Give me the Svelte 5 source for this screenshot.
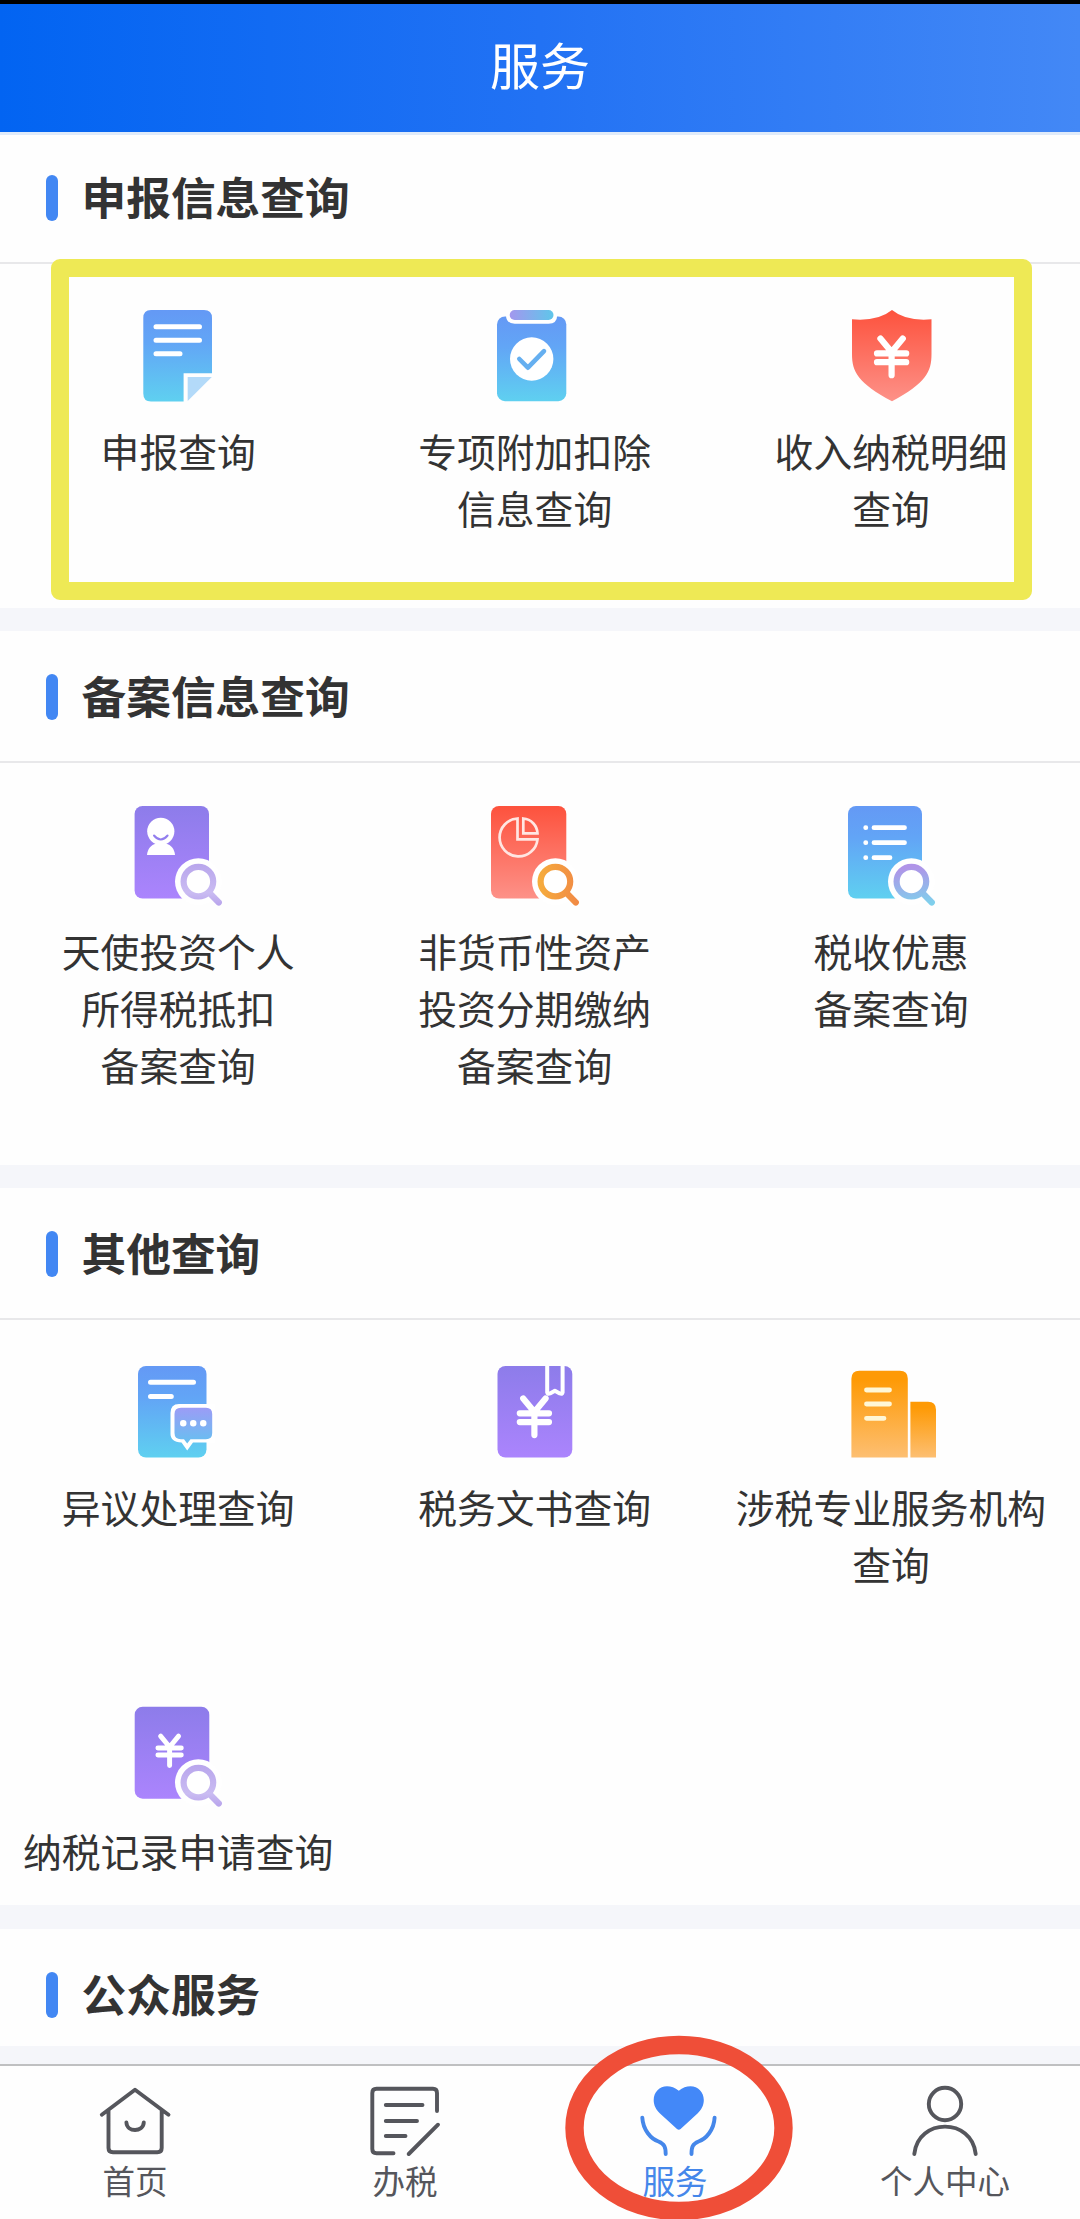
<script>
	const sections = [
		{
			title: '申报信息查询',
			items: [
				{ icon: 'report', lines: ['申报查询'] },
				{ icon: 'clipboard', lines: ['专项附加扣除', '信息查询'] },
				{ icon: 'shield', lines: ['收入纳税明细', '查询'] }
			]
		},
		{
			title: '备案信息查询',
			items: [
				{ icon: 'angel', lines: ['天使投资个人', '所得税抵扣', '备案查询'] },
				{ icon: 'asset', lines: ['非货币性资产', '投资分期缴纳', '备案查询'] },
				{ icon: 'discount', lines: ['税收优惠', '备案查询'] }
			]
		},
		{
			title: '其他查询',
			short: true,
			items: [
				{ icon: 'dispute', lines: ['异议处理查询'] },
				{ icon: 'document', lines: ['税务文书查询'] },
				{ icon: 'agency', lines: ['涉税专业服务机构', '查询'] },
				{ icon: 'record', lines: ['纳税记录申请查询'] }
			]
		},
		{ title: '公众服务', items: [] }
	];

	const tabs = [
		{ id: 'home', label: '首页' },
		{ id: 'tax', label: '办税' },
		{ id: 'service', label: '服务' },
		{ id: 'me', label: '个人中心' }
	];

	let active = $state('service');
</script>

{#snippet yen(x, y, s)}
	<g transform="translate({x} {y}) scale({s})" class="white" stroke-width="6.2">
		<path d="M-11.2 -18L0 -4.500L11.2 -18M0 -4.500V18.600M-14.600 -3.200H14.600M-14.600 5.600H14.600" />
	</g>
{/snippet}

{#snippet lens(paint)}
	<circle cx="75.400" cy="80.600" r="23.400" fill="#fff" />
	<g stroke={paint} fill="none" stroke-width="6.200" stroke-linecap="round">
		<circle cx="75.400" cy="80.600" r="14.800" />
		<path d="M87 92.500L95.800 101.500" />
	</g>
{/snippet}

<svg class="defs" width="0" height="0">
	<defs>
		<linearGradient id="blue" x1="0" y1="0" x2="0" y2="1">
			<stop offset="0" stop-color="#6499f5" />
			<stop offset="0.35" stop-color="#62a5f6" />
			<stop offset="1" stop-color="#5fd0f0" />
		</linearGradient>
		<linearGradient id="purple" x1="0" y1="0" x2="0" y2="1">
			<stop offset="0" stop-color="#8d7cea" />
			<stop offset="1" stop-color="#ab84fd" />
		</linearGradient>
		<linearGradient id="red" x1="0" y1="0" x2="0" y2="1">
			<stop offset="0" stop-color="#fd523d" />
			<stop offset="1" stop-color="#fd9188" />
		</linearGradient>
		<linearGradient id="orange" x1="0" y1="0" x2="0" y2="1">
			<stop offset="0.1" stop-color="#fe9a05" />
			<stop offset="1" stop-color="#fdbf72" />
		</linearGradient>
		<linearGradient id="clip" x1="0" y1="0" x2="1" y2="0">
			<stop offset="0" stop-color="#a397ee" />
			<stop offset="1" stop-color="#5fc6ea" />
		</linearGradient>
		<linearGradient id="bubble" x1="0" y1="0" x2="0" y2="1">
			<stop offset="0" stop-color="#9c9cf6" />
			<stop offset="1" stop-color="#66c0f0" />
		</linearGradient>
		<linearGradient id="lensLilac" gradientUnits="userSpaceOnUse" x1="75" y1="62" x2="75" y2="104">
			<stop offset="0" stop-color="#b8a5ec" />
			<stop offset="0.7" stop-color="#cabcf2" />
			<stop offset="1" stop-color="#b9a5ec" />
		</linearGradient>
		<linearGradient id="lensOrange" gradientUnits="userSpaceOnUse" x1="58" y1="80" x2="98" y2="80">
			<stop offset="0" stop-color="#f6ad3c" />
			<stop offset="1" stop-color="#f18a45" />
		</linearGradient>
		<linearGradient id="lensBlue" gradientUnits="userSpaceOnUse" x1="75" y1="62" x2="80" y2="104">
			<stop offset="0.1" stop-color="#b094e8" />
			<stop offset="1" stop-color="#7fd0ec" />
		</linearGradient>
	</defs>
</svg>

<div class="page">
	<header>服务</header>

	<main>
		{#each sections as section}
			<section>
				<h2><span>{section.title}</span></h2>
				{#if section.items.length}
					<div class="grid" class:short={section.short}>
						{#each section.items as item}
							<div class="item">
								<svg class="icon" viewBox="0 0 110 110">
									{#if item.icon === 'report'}
										<path d="M28 8H81Q89 8 89 16V71.300H60.600V99.500H28Q20.300 99.500 20.300 91.500V16Q20.300 8 28 8Z" fill="url(#blue)" />
										<path d="M64.700 75H88.800L64.700 99Z" fill="#b3daf9" />
										<path class="white" stroke-width="5" d="M33 24.800H76.500M33 38.200H76.500M33 51.700H57" />
									{:else if item.icon === 'clipboard'}
										<rect x="17" y="14.500" width="69.300" height="84.700" rx="8" fill="url(#blue)" />
										<path d="M26 8H77.200V13Q77.200 21.700 68.500 21.700H34.700Q26 21.700 26 13Z" fill="#fff" />
										<rect x="29.700" y="8" width="43.800" height="10" rx="5" fill="url(#clip)" />
										<circle cx="51.700" cy="57" r="21.700" fill="#fff" />
										<path d="M39.300 57L47.900 65.700L64 49.200" fill="none" stroke="#65aff0" stroke-width="4.600" stroke-linecap="round" stroke-linejoin="round" />
									{:else if item.icon === 'shield'}
										<path d="M56 8Q70 19.500 95.500 17.300V52C95.500 70 90 81 56 99.300C22 81 16 70 16 52V17.300Q42 19.500 56 8Z" fill="url(#red)" />
										{@render yen(55.6, 54.6, 1)}
									{:else if item.icon === 'angel'}
										<rect x="11.600" y="5" width="74.400" height="92.500" rx="8" fill="url(#purple)" />
										<circle cx="37.800" cy="30.300" r="13.600" fill="#fff" />
										<path d="M24 54C24.500 48 28 44 33 42.500H43C48 44 51.500 48 52 54Z" fill="#fff" />
										<path d="M31 34.500Q37.800 42.500 44.600 34.500" fill="none" stroke="#927eee" stroke-width="2" stroke-linecap="round" />
										{@render lens('url(#lensLilac)')}
									{:else if item.icon === 'asset'}
										<rect x="11" y="5" width="75.300" height="92.500" rx="8" fill="url(#red)" />
										<path d="M37.500 17.500A19 19 0 1 0 57.500 38.300H37.500ZM43.300 17.500V32.300H57.500A15.500 15.500 0 0 0 43.300 17.500Z" fill="none" stroke="#ffe6e2" stroke-width="2.700" />
										{@render lens('url(#lensOrange)')}
									{:else if item.icon === 'discount'}
										<rect x="12" y="5" width="74" height="92.500" rx="8" fill="url(#blue)" />
										<path class="white" stroke-width="4.800" d="M29.700 26.700H29.800M38 26.700H68.500M29.700 41.700H29.800M38 41.700H68.500M29.700 56.700H29.800M38 56.700H54" />
										{@render lens('url(#lensBlue)')}
									{:else if item.icon === 'dispute'}
										<rect x="15" y="8" width="68.500" height="91.500" rx="8" fill="url(#blue)" />
										<path class="white" stroke-width="5" d="M27.500 24.300H70.500M27.500 38.400H48.300" />
										<path d="M56 46H92V84.600H70L64.200 92.500L58.500 84.600C51 84 47.500 81 47.500 76V55Q47.500 46 56 46Z" fill="#fff" />
										<path d="M58 49.700H83Q89.200 49.700 89.200 56V75Q89.200 81.200 83 81.200H67.500L64.200 85.500L61 81.200H58Q51.500 81.200 51.500 75V56Q51.500 49.700 58 49.700Z" fill="url(#bubble)" />
										<path class="white" stroke-width="6.400" d="M60.200 65.200H60.300M70.200 65.200H70.300M80.200 65.200H80.300" />
									{:else if item.icon === 'document'}
										<rect x="17.500" y="8" width="74.800" height="91.500" rx="8" fill="url(#purple)" />
										<path class="white butt" stroke-width="4" d="M67.200 8V34.500Q67.500 36.500 70 35.500L74.900 32.800L79.800 35.500Q82.300 36.500 82.600 34.500V8" />
										{@render yen(54.4, 58.5, 1)}
									{:else if item.icon === 'agency'}
										<path d="M15.400 99.500V20.700Q15.400 12.700 23.400 12.700H63.800Q71.800 12.700 71.800 20.700V99.500Z" fill="url(#orange)" />
										<path d="M74.400 99.500V43.700H92Q100 43.700 100 51.700V99.500Z" fill="url(#orange)" />
										<path d="M30.500 32H53.500M30.500 46H53.500M30.500 60.300H48" fill="none" stroke="#fff7d6" stroke-width="4.800" stroke-linecap="round" />
									{:else if item.icon === 'record'}
										<rect x="11.700" y="4.700" width="74.600" height="92" rx="8" fill="url(#purple)" />
										{@render yen(46.6, 48.6, 0.8)}
										{@render lens('url(#lensLilac)')}
									{/if}
								</svg>
								{#each item.lines as line}
									<span>{line}</span>
								{/each}
							</div>
						{/each}
					</div>
				{/if}
			</section>
		{/each}
	</main>

	<nav>
		{#each tabs as tab}
			<button class:active={active === tab.id} onclick={() => (active = tab.id)}>
				<svg class="tab-icon" viewBox="0 0 80 80">
					{#if tab.id === 'home'}
						<path d="M6.800 34.700L40 9.700L73.500 34.700M13.500 30.500V68Q13.500 72.300 18 72.300H62.300Q66.700 72.300 66.700 68V30.500M31.400 42.500C32 52.500 48 52.500 48.800 42.500" />
					{:else if tab.id === 'tax'}
						<path d="M72 31V13Q72 8.800 68 8.800H11.500Q7.300 8.800 7.300 13V69Q7.300 73.300 11.500 73.300H28.500M20.800 25H57.500M20.800 41H52M20.800 56H40.500M73 44.700L43.700 74" />
					{:else if tab.id === 'service'}
						<path d="M43.800 10.700C40 7.500 36 6.200 32 6.200C24.500 6.200 18.700 12 18.700 20C18.700 25.500 21 29.500 25 33.500L42 49Q43.800 50.500 45.600 49L62.500 33.500C66.500 29.500 68.800 25.500 68.800 20C68.800 12 63 6.200 55.500 6.200C51.500 6.200 47.500 7.500 43.800 10.700Z" class="heart" />
						<path d="M7.300 37.700C8 50 16 59 23.500 61.500C29.500 64 30.700 67 30.700 74M79.600 37.700C79 50 71 59 63.500 61.500C57.500 64 56.500 67 56.500 74" />
					{:else}
						<circle cx="40" cy="24" r="16.200" />
						<path d="M9.300 74C13 37.500 67 37.500 70.700 74" />
					{/if}
				</svg>
				{tab.label}
			</button>
		{/each}
	</nav>

	<div class="box-mark"></div>
	<svg class="ring-mark" viewBox="0 0 230 186">
		<ellipse cx="115" cy="93" rx="104.500" ry="83" />
	</svg>
</div>

<style>
	:global(body) {
		background: #fff;
	}
	.page {
		position: relative;
		display: flex;
		flex-direction: column;
		width: 1080px;
		height: 2219px;
		overflow: hidden;
		font-family: "Noto Sans CJK SC", sans-serif;
		color: #333;
		background: #f5f6fa;
	}
	.defs {
		position: absolute;
	}
	header {
		box-sizing: border-box;
		height: 132px;
		border-top: 4px solid #000;
		background: linear-gradient(90deg, #0264f2, #2272f4 50%, #4388f6);
		color: #fff;
		font-size: 50px;
		line-height: 119px;
		text-align: center;
	}
	main {
		display: flex;
		flex-direction: column;
		gap: 23px;
		height: 1932px;
		overflow: hidden;
	}
	section {
		flex-shrink: 0;
		background: #fefefe;
	}
	section:first-child {
		box-shadow: inset 0 3px 0 #e0ebfa;
	}
	section:nth-child(2) {
		height: 534px;
	}
	section:last-child {
		height: 117px;
		margin-top: 1px;
		overflow: hidden;
	}
	h2 {
		display: flex;
		align-items: center;
		gap: 23.5px;
		box-sizing: border-box;
		height: 132px;
		margin: 0;
		padding-left: 46px;
		border-bottom: 2px solid #e8e8ea;
		font-size: 44.7px;
		font-weight: 700;
		line-height: 60px;
	}
	h2::before {
		content: '';
		width: 12px;
		height: 46px;
		margin-top: 2px;
		border-radius: 6px;
		background: #4287f3;
	}
	h2 span {
		padding-bottom: 2px;
	}
	section:last-child h2 {
		border-bottom-color: transparent;
	}
	.grid {
		display: grid;
		grid-template-columns: repeat(3, 356.4px);
		row-gap: 108px;
		padding: 38px 0 70px;
	}
	.grid.short {
		padding-bottom: 24px;
	}
	.item {
		display: flex;
		flex-direction: column;
		align-items: center;
	}
	.icon {
		width: 110px;
		height: 110px;
		margin-bottom: 10px;
	}
	section:nth-child(2) .icon {
		margin-bottom: 11px;
	}
	.item span {
		font-size: 38.8px;
		line-height: 57px;
		white-space: nowrap;
	}
	.item span:last-child {
		margin-bottom: 2px;
	}
	.white {
		fill: none;
		stroke: #fff;
		stroke-linecap: round;
		stroke-linejoin: round;
	}
	.butt {
		stroke-linecap: butt;
	}
	nav {
		display: grid;
		grid-template-columns: repeat(4, 1fr);
		flex: 1;
		box-sizing: border-box;
		border-top: 2px solid #bfc0c1;
		background: #fefefe;
	}
	button {
		display: flex;
		flex-direction: column;
		align-items: center;
		padding: 14px 0 0;
		border: 0;
		background: none;
		color: #55565c;
		font-family: inherit;
		font-size: 32.5px;
		line-height: 40px;
	}
	button.active {
		color: #4587ea;
	}
	.tab-icon {
		width: 80px;
		height: 80px;
		overflow: visible;
		fill: none;
		stroke: currentColor;
		stroke-width: 3.9;
		stroke-linecap: round;
		stroke-linejoin: round;
	}
	.heart {
		fill: #4388f8;
		stroke: none;
	}
	.box-mark {
		position: absolute;
		left: 51px;
		top: 259px;
		box-sizing: border-box;
		width: 981px;
		height: 341px;
		border: 18px solid #eee955;
		border-radius: 9px;
	}
	.ring-mark {
		position: absolute;
		left: 563.5px;
		top: 2035px;
		width: 230px;
		height: 186px;
		fill: none;
		stroke: #ef4e38;
		stroke-width: 18.4;
	}
</style>
